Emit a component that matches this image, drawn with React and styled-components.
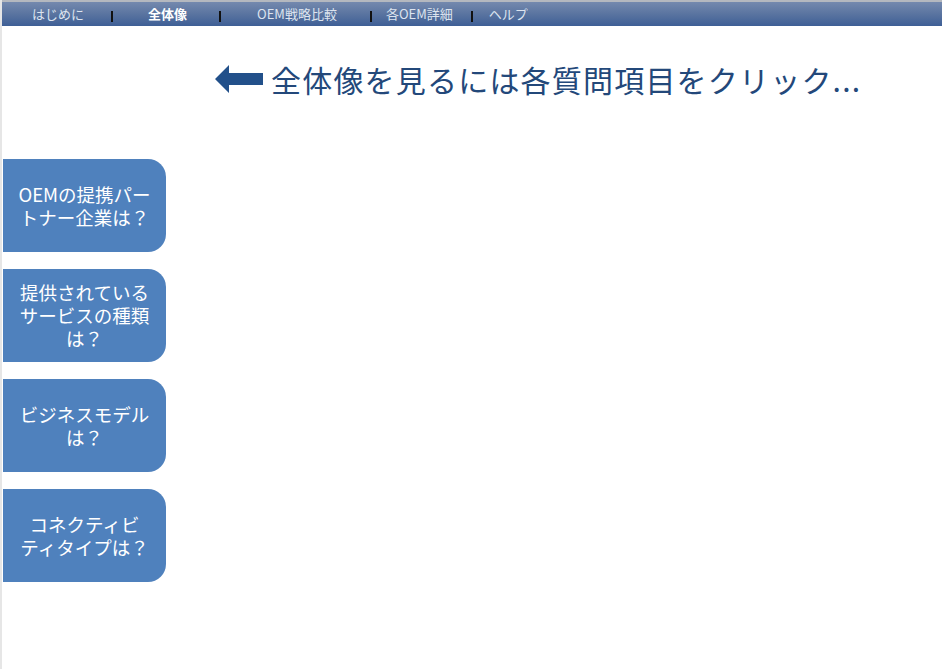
import styled, { createGlobalStyle } from "styled-components";

const GlobalStyle = createGlobalStyle`
  html, body {
    margin: 0;
    padding: 0;
    background: #fff;
  }
  body {
    font-family: "Noto Sans CJK JP", "Noto Sans", sans-serif;
  }
`;

const navItems = [
  { label: "はじめに", ml: 30 },
  { sep: true, ml: 27 },
  { label: "全体像", ml: 35, active: true },
  { sep: true, ml: 32 },
  { label: "OEM戦略比較", ml: 36 },
  { sep: true, ml: 33 },
  { label: "各OEM詳細", ml: 14 },
  { sep: true, ml: 18 },
  { label: "ヘルプ", ml: 16 },
];

const questions = [
  ["OEMの提携パー", "トナー企業は？"],
  ["提供されている", "サービスの種類", "は？"],
  ["ビジネスモデル", "は？"],
  ["コネクティビ", "ティタイプは？"],
];

const App = () => {
  return (
    <>
      <GlobalStyle />
      <Page>
        <NavBar>
          {navItems.map((item, i) =>
            item.sep ? (
              <Separator key={i} $ml={item.ml} />
            ) : (
              <NavItem key={i} $ml={item.ml} $active={item.active}>
                {item.label}
              </NavItem>
            )
          )}
        </NavBar>

        {/* heading with arrow */}
        <HeadingRow>
          <svg width="48" height="28" viewBox="0 0 48 28">
            <polygon points="0,14 14,0 14,8 48,8 48,20 14,20 14,28" fill="#22508a" />
          </svg>
          <Heading>全体像を見るには各質問項目をクリック...</Heading>
        </HeadingRow>

        {/* question buttons */}
        <QuestionList>
          {questions.map((lines, i) => (
            <QuestionButton key={i}>
              {lines.map((l, j) => (
                <Line key={j}>{l}</Line>
              ))}
            </QuestionButton>
          ))}
        </QuestionList>
      </Page>
    </>
  );
};

export default App;

const Page = styled.div`
  min-height: 100vh;
  border-left: 2px solid #e6e6e6;
  box-sizing: border-box;
`;

const NavBar = styled.div`
  height: 24px;
  border-top: 2px solid #b4b8bf;
  background: linear-gradient(to bottom, #7489ae 0%, #5a74a0 50%, #3e5f96 100%);
  display: flex;
  align-items: center;
`;

const NavItem = styled.div`
  margin-left: ${(p) => p.$ml}px;
  font-size: 13px;
  line-height: 24px;
  color: ${(p) => (p.$active ? "#ffffff" : "#dde4ef")};
  font-weight: ${(p) => (p.$active ? 700 : 400)};
  white-space: nowrap;
`;

const Separator = styled.div`
  margin-left: ${(p) => p.$ml}px;
  width: 2px;
  height: 11px;
  margin-top: 4px;
  background: #111;
`;

const HeadingRow = styled.div`
  display: flex;
  align-items: center;
  gap: 8px;
  padding: 26px 0 0 213px;
  height: 54px;
`;

const Heading = styled.h1`
  margin: 0;
  font-size: 30px;
  line-height: 40px;
  font-weight: 400;
  color: #23487a;
  white-space: nowrap;
  letter-spacing: 1.2px;
`;

const QuestionList = styled.div`
  display: flex;
  flex-direction: column;
  gap: 17px;
  margin-top: 53px;
  padding-left: 1px;
`;

const QuestionButton = styled.div`
  width: 163px;
  height: 93px;
  box-sizing: border-box;
  background: #4f81bd;
  border-radius: 0 18px 18px 0;
  display: flex;
  flex-direction: column;
  align-items: center;
  justify-content: center;
  color: #fff;
  font-size: 18.5px;
  text-align: center;
  white-space: nowrap;
  cursor: pointer;
`;

const Line = styled.span`
  display: block;
  line-height: 23px;
`;
